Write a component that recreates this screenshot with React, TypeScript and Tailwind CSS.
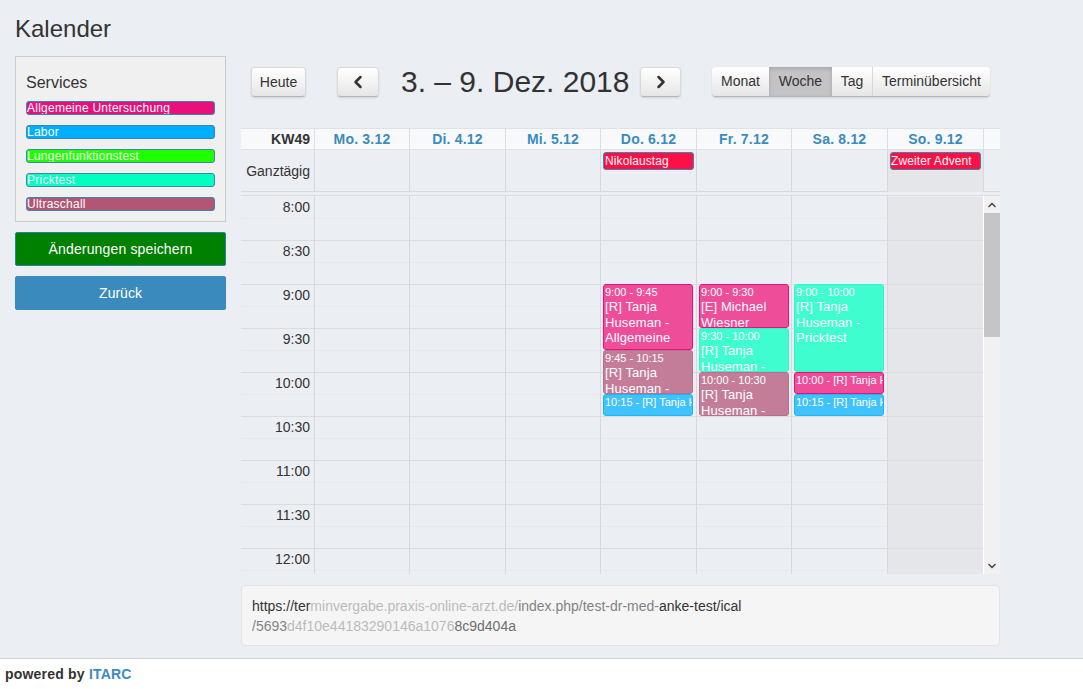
import { ChevronLeft, ChevronRight, ChevronUp, ChevronDown } from 'lucide-react';

const services = [
  { name: 'Allgemeine Untersuchung', color: 'bg-[#e9107c]' },
  { name: 'Labor', color: 'bg-[#00aeff]' },
  { name: 'Lungenfunktionstest', color: 'bg-[#1eff00]' },
  { name: 'Pricktest', color: 'bg-[#00ffc0]' },
  { name: 'Ultraschall', color: 'bg-[#b35575]' },
];

const days = ['Mo. 3.12', 'Di. 4.12', 'Mi. 5.12', 'Do. 6.12', 'Fr. 7.12', 'Sa. 8.12', 'So. 9.12'];
const times = ['8:00', '8:30', '9:00', '9:30', '10:00', '10:30', '11:00', '11:30', '12:00'];

type Ev = { time: string; title?: string; pos: string; tone: string };

const PINK = 'bg-[#ee4d9a] border-[#e9107c]';
const TEAL = 'bg-[#40fdd0] border-[#33f5c5]';
const MAUVE = 'bg-[#c47d98] border-[#b96f8d]';
const BLUE = 'bg-[#40c2fc] border-[#1fb4f7]';

const events: Record<number, Ev[]> = {
  3: [
    { time: '9:00 - 9:45', title: '[R] Tanja Huseman - Allgemeine Untersuchung', pos: 'top-[88px] h-[66px]', tone: PINK },
    { time: '9:45 - 10:15', title: '[R] Tanja Huseman - Ultraschall', pos: 'top-[154px] h-[44px]', tone: MAUVE },
    { time: '10:15 - [R] Tanja Huseman - Labor', pos: 'top-[198px] h-[22px]', tone: BLUE },
  ],
  4: [
    { time: '9:00 - 9:30', title: '[E] Michael Wiesner', pos: 'top-[88px] h-[44px]', tone: PINK },
    { time: '9:30 - 10:00', title: '[R] Tanja Huseman - Pricktest', pos: 'top-[132px] h-[44px]', tone: TEAL },
    { time: '10:00 - 10:30', title: '[R] Tanja Huseman - Ultraschall', pos: 'top-[176px] h-[44px]', tone: MAUVE },
  ],
  5: [
    { time: '9:00 - 10:00', title: '[R] Tanja Huseman - Pricktest', pos: 'top-[88px] h-[88px]', tone: TEAL },
    { time: '10:00 - [R] Tanja Huseman - Allgemeine', pos: 'top-[176px] h-[22px]', tone: PINK },
    { time: '10:15 - [R] Tanja Huseman - Labor', pos: 'top-[198px] h-[22px]', tone: BLUE },
  ],
};

const COLS = 'grid grid-cols-[73px_95px_96px_95px_96px_95px_96px_96px_17px]';

function Slots({ sunday }: { sunday?: boolean }) {
  return (
    <>
      {times.map(t => (
        <div key={t} className={sunday ? 'bg-[#e5e6ea]' : ''}>
          <div className="h-[22px] border-b border-[#e6e8ec]" />
          <div className="h-[22px] border-b border-[#dadce0]" />
        </div>
      ))}
    </>
  );
}

function NavButton({ children, className = '' }: { children: React.ReactNode; className?: string }) {
  return (
    <button className={'h-[30px] flex items-center justify-center rounded-[4px] border border-[#d9d9d9] border-b-[#b5b5b5] bg-gradient-to-b from-white to-[#e6e6e6] shadow-[0_1px_2px_rgba(0,0,0,0.12)] text-[14px] text-[#333] ' + className}>
      {children}
    </button>
  );
}

export default function App() {
  return (
    <div className="w-[1083px] h-[689px] overflow-hidden flex flex-col bg-[#ebeef3] text-[#333] font-['Liberation_Sans',Arial,sans-serif]">
      <div className="flex-1 px-[15px] min-h-0">
        <h1 className="h-[56px] pt-[14px] text-[24px] leading-[30px] text-[#333]">Kalender</h1>

        <div className="flex gap-[15px]">
          {/* left column */}
          <div className="w-[211px] shrink-0">
            <div className="h-[166px] border border-[#ccc] bg-[#f0f0f1] px-[10px] pt-[16px]">
              <div className="text-[16px] leading-[20px] mb-[8px]">Services</div>
              <div className="flex flex-col gap-[10px]">
                {services.map(s => (
                  <div key={s.name} className={'h-[14px] rounded-[3px] border border-[#3a87ad] text-white text-[12px] leading-[12px] tracking-[0.25px] whitespace-nowrap overflow-hidden ' + s.color}>
                    {s.name}
                  </div>
                ))}
              </div>
            </div>
            <button className="mt-[10px] w-full h-[34px] rounded-[2px] bg-[#008000] border border-[#2c7fa8] text-white text-[14px] tracking-[0.15px]">Änderungen speichern</button>
            <button className="mt-[10px] w-full h-[34px] rounded-[2px] bg-[#3a8abd] border border-[#3a8abd] text-white text-[14px]">Zurück</button>
          </div>

          {/* calendar */}
          <div className="w-[759px] shrink-0">
            <div className="h-[72px] pt-[11px] pl-[10px] flex items-start">
              <NavButton className="w-[55px]">Heute</NavButton>
              <NavButton className="w-[42px] ml-[31px]"><ChevronLeft size={20} strokeWidth={3} /></NavButton>
              <div className="ml-[22px] w-[228px] text-[30px] leading-[30px] whitespace-nowrap">3. – 9. Dez. 2018</div>
              <NavButton className="w-[41px] ml-[11px]"><ChevronRight size={20} strokeWidth={3} /></NavButton>
              <div className="ml-[31px] flex h-[30px] rounded-[4px] shadow-[0_1px_2px_rgba(0,0,0,0.12)] text-[14px] border-b border-[#b5b5b5]">
                <div className="w-[57px] flex items-center justify-center rounded-l-[4px] bg-gradient-to-b from-white to-[#e6e6e6]">Monat</div>
                <div className="w-[63px] flex items-center justify-center bg-[#c4c4c6] shadow-[inset_0_2px_4px_rgba(0,0,0,0.15)]">Woche</div>
                <div className="w-[41px] flex items-center justify-center border-r border-[#d8d8d8] bg-gradient-to-b from-white to-[#e6e6e6]">Tag</div>
                <div className="w-[117px] flex items-center justify-center rounded-r-[4px] bg-gradient-to-b from-white to-[#e6e6e6]">Terminübersicht</div>
              </div>
            </div>

            {/* head row */}
            <div className={COLS + ' h-[22px] bg-[#f8f9fb] border-t border-[#dfe1e5] border-b border-b-[#dfe1e5] text-[14px] font-bold leading-[20px]'}>
              <div className="text-right pr-[4px] text-[#333]">KW49</div>
              {days.map(d => (
                <div key={d} className="border-l border-[#dcdee2] text-center text-[#3a8bc0] tracking-[0.2px]">{d}</div>
              ))}
              <div className="border-l border-[#dcdee2]" />
            </div>

            {/* all day row */}
            <div className={COLS + ' h-[42px] border-b border-[#d6d8dc]'}>
              <div className="text-right pr-[4px] text-[14px] leading-[42px]">Ganztägig</div>
              {days.map((d, i) => (
                <div key={d} className={'border-l border-[#d6d8dc] px-[2px] pt-[2px] ' + (i === 6 ? 'bg-[#e5e6ea]' : '')}>
                  {i === 3 && <div className="h-[18px] w-[91px] rounded-[3px] border border-[#3a87ad] bg-[#ff0f45] text-white text-[12px] leading-[16px] tracking-[0.1px] pl-px">Nikolaustag</div>}
                  {i === 6 && <div className="h-[18px] w-[91px] rounded-[3px] border border-[#3a87ad] bg-[#ff0f45] text-white text-[12px] leading-[16px] tracking-[0.1px] whitespace-nowrap">Zweiter Advent</div>}
                </div>
              ))}
              <div className="border-l border-[#d6d8dc]" />
            </div>

            {/* time grid */}
            <div className={COLS + ' mt-[3px] border-t border-[#dcdee2] h-[379px] overflow-hidden'}>
              <div className="relative pt-px">
                <Slots />
                <div className="absolute inset-0 text-right pr-[4px] text-[14px]">
                  {times.map(t => (
                    <div key={t} className="h-[44px] leading-[22px]">{t}</div>
                  ))}
                </div>
              </div>
              {days.map((d, i) => (
                <div key={d} className="relative pt-px border-l border-[#d6d8dc]">
                  <Slots sunday={i === 6} />
                  {(events[i] || []).map(e => (
                    <div key={e.time} className={'absolute left-[2px] w-[90px] overflow-hidden rounded-[3px] border text-white ' + e.pos + ' ' + e.tone}>
                      <div className="text-[11px] leading-[13px] whitespace-nowrap pt-px pl-px">{e.time}</div>
                      {e.title && <div className="text-[13px] leading-[15.5px] tracking-[0.1px] pl-px pr-[6px]">{e.title}</div>}
                    </div>
                  ))}
                </div>
              ))}
              <div className="border-l border-white bg-[#f1f1f1] flex flex-col items-stretch h-[378px]">
                <div className="h-[17px] flex items-center justify-center text-[#505050]"><ChevronUp size={12} strokeWidth={3.5} /></div>
                <div className="h-[124px] bg-[#c5c5c7]" />
                <div className="flex-1" />
                <div className="h-[17px] flex items-center justify-center text-[#505050]"><ChevronDown size={12} strokeWidth={3.5} /></div>
              </div>
            </div>

            {/* url, partly illegible in the picture */}
            <div className="mt-[11px] h-[61px] rounded-[4px] border border-[#e3e3e3] bg-[#f5f5f5] px-[10px] py-[10px] text-[14px] leading-[20px] text-[#333]">
              <div className="whitespace-nowrap">https://ter<span className="opacity-30">minvergabe.praxis-online-arzt.de/</span><span className="opacity-60">index.php/test-dr-med-</span>anke-test/ical</div>
              <div className="whitespace-nowrap"><span className="opacity-60">/5693</span><span className="opacity-30">d4f10e44183290146a1076</span><span className="opacity-70">8c9d404a</span></div>
            </div>
          </div>
        </div>
      </div>

      <div className="h-[31px] shrink-0 bg-white border-t border-[#cfd3d6] px-[5px] text-[14px] font-bold leading-[30px] tracking-[0.2px]">
        powered by <span className="text-[#3a8bc0]">ITARC</span>
      </div>
    </div>
  );
}
